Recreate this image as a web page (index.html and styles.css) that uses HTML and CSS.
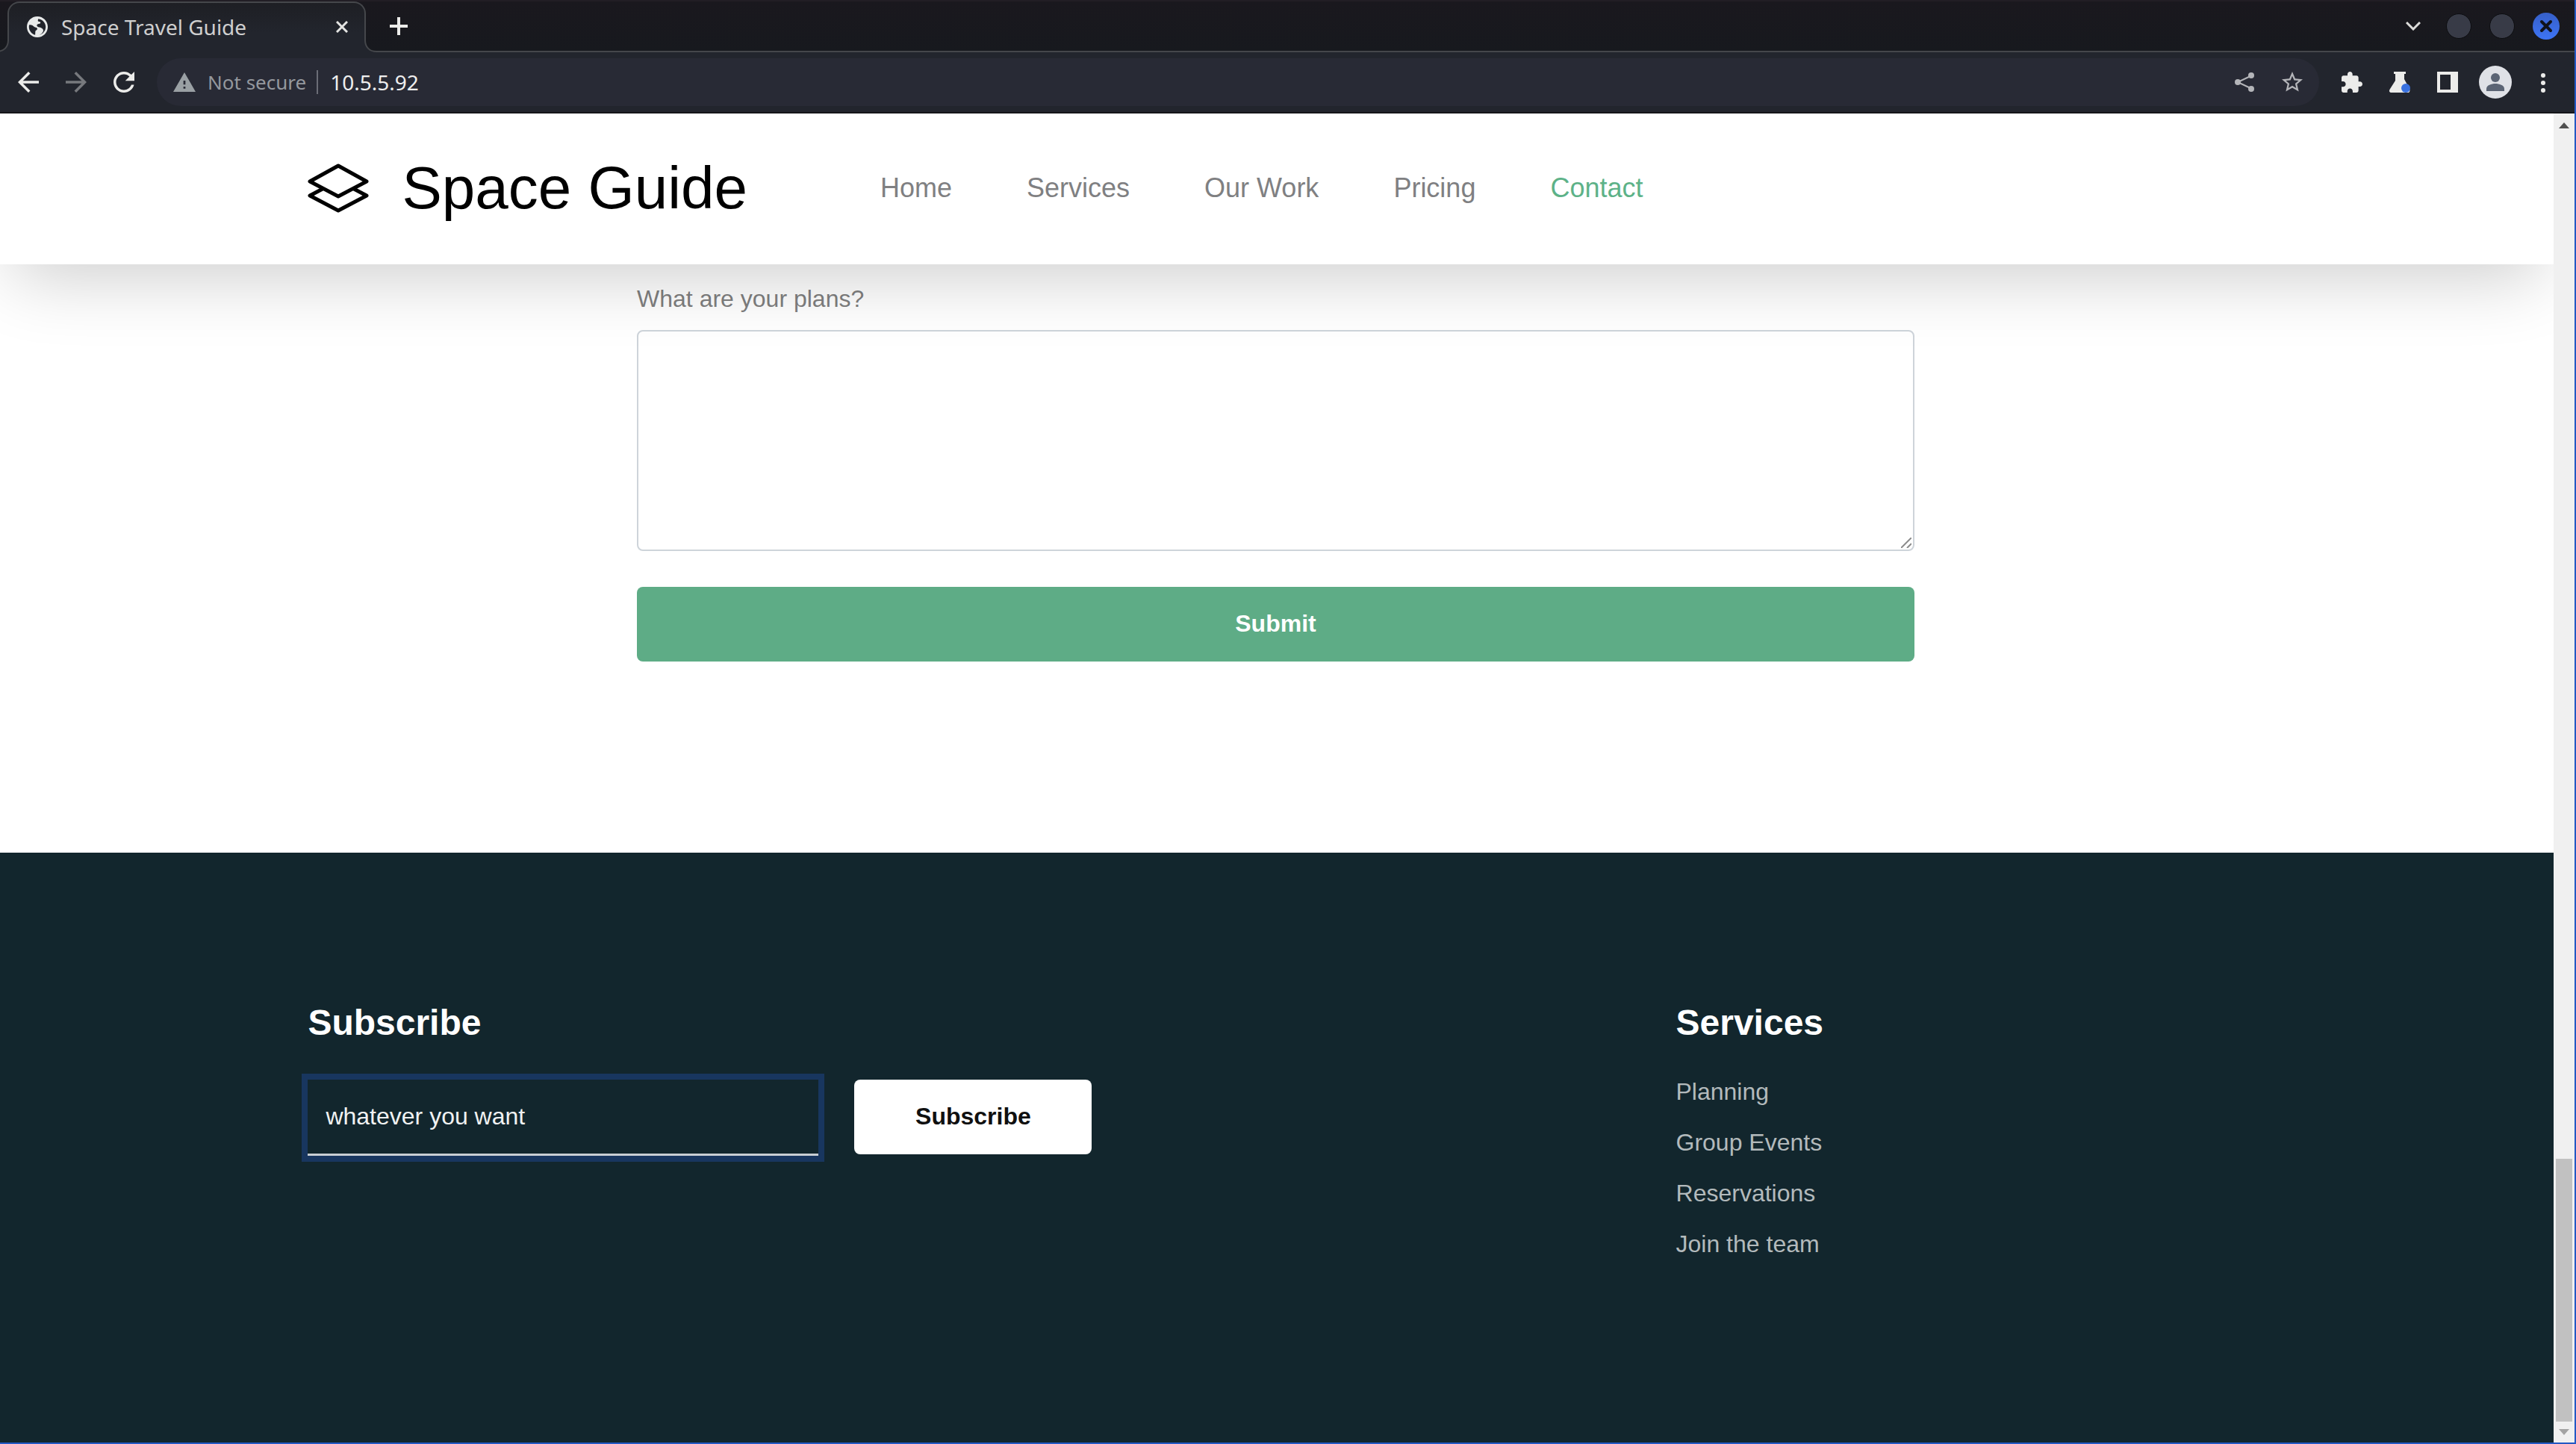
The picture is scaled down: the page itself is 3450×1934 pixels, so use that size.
FILE: index.html
```html
<!DOCTYPE html>
<html lang="en">
<head>
<meta charset="utf-8">
<title>Space Travel Guide</title>
<link rel="stylesheet" href="styles.css">
</head>
<body>
<div class="window">
  <div class="tabstrip">
    <div class="tab">
      <svg class="tab-foot foot-left" viewBox="0 0 16 16"><path fill="#22252d" d="M16 0v16H0v-1c9 0 15-6 15-15z"/><path d="M15 0c0 9-6 15-15 15" fill="none" stroke="#45474b" stroke-width="2"/></svg>
      <svg class="tab-foot foot-right" viewBox="0 0 16 16"><path fill="#22252d" d="M0 0v16h16v-1C7 15 1 9 1 0z"/><path d="M1 0c0 9 6 15 15 15" fill="none" stroke="#45474b" stroke-width="2"/></svg>
      <svg class="favicon" viewBox="2 2 20 20"><path fill="#e8eaea" d="M12 2C6.480 2 2 6.480 2 12s4.480 10 10 10 10-4.480 10-10S17.520 2 12 2zM4 12c0-.6.080-1.200.2-1.800C5.600 9.700 7.300 10.200 8.600 11.600c1 1.100 2.600.6 3.200 1.700.5 1-.3 2-1.400 2.300-.6 1.100-.2 2.400-.5 4.100C6.500 18.800 4 15.700 4 12zm9.900 7.700c1.500-.8 3-1.800 3.700-3.500.5-1.300-.5-2.700-1.700-3.200-1.700-.7-2.600-.4-3.800-1.300-.9-.8-.6-2 .5-2.400 1-.4 2.100.1 2.400-1 .2-1-.9-1.200-1.900-1.400-.7-.2-.8-1.400-.1-2.600C17 4.900 20 8.100 20 12c0 3.600-2.500 6.800-6.100 7.700z"/></svg>
      <span class="tab-title">Space Travel Guide</span>
      <button class="icon-btn tab-close" aria-label="Close tab"><svg viewBox="0 0 16 16"><path d="M1 1l14 14M15 1L1 15" fill="none" stroke="#e4e4e2" stroke-width="3"/></svg></button>
    </div>
    <button class="icon-btn new-tab" aria-label="New tab"><svg viewBox="0 0 24 24"><path d="M12 0v24M0 12h24" fill="none" stroke="#ececea" stroke-width="4"/></svg></button>
    <div class="window-controls">
      <button class="icon-btn chevron" aria-label="Search tabs"><svg viewBox="0 0 20 12"><path d="M1 1l9 9 9-9" fill="none" stroke="#dcdcda" stroke-width="3"/></svg></button>
      <button class="dot" aria-label="Minimize"></button>
      <button class="dot" aria-label="Maximize"></button>
      <button class="dot dot-close" aria-label="Close window"><svg viewBox="0 0 36 36"><path d="M12 12l12 12M24 12L12 24" stroke="#10131c" stroke-width="4" stroke-linecap="round"/></svg></button>
    </div>
  </div>

  <div class="toolbar">
    <div class="nav-buttons">
      <button class="icon-btn" aria-label="Back"><svg viewBox="4 4 16 16"><path fill="#ececea" d="M20 11H7.830l5.590-5.590L12 4l-8 8 8 8 1.410-1.410L7.830 13H20v-2z"/></svg></button>
      <button class="icon-btn" aria-label="Forward"><svg viewBox="4 4 16 16"><path fill="#77797d" d="M12 4l-1.410 1.410L16.170 11H4v2h12.170l-5.580 5.590L12 20l8-8z"/></svg></button>
      <button class="icon-btn" aria-label="Reload"><svg viewBox="4 4 16 16"><path fill="#ececea" d="M17.650 6.350C16.200 4.900 14.210 4 12 4c-4.420 0-7.990 3.580-7.990 8s3.570 8 7.990 8c3.730 0 6.840-2.550 7.730-6h-2.080c-.82 2.330-3.040 4-5.650 4-3.310 0-6-2.690-6-6s2.690-6 6-6c1.660 0 3.140.69 4.220 1.780L13 11h7V4l-2.350 2.350z"/></svg></button>
    </div>
    <div class="omnibox">
      <svg class="warn" viewBox="1 2 22 19"><path fill="#9aa0a4" d="M1 21h22L12 2 1 21zm12-3h-2v-2h2v2zm0-4h-2v-4h2v4z"/></svg>
      <span class="insecure">Not secure</span>
      <span class="divider"></span>
      <input class="address" aria-label="Address" value="10.5.5.92">
      <button class="icon-btn share" aria-label="Share"><svg viewBox="0 0 28 28"><path d="M24 5L5 14l19 9" fill="none" stroke="#b4b5b9" stroke-width="2"/><g fill="#b4b5b9"><circle cx="23" cy="5" r="4"/><circle cx="5" cy="14" r="4"/><circle cx="23" cy="23" r="4"/></g></svg></button>
      <button class="icon-btn" aria-label="Bookmark"><svg viewBox="2 2 20 20"><path fill="#b4b5b9" d="M22 9.240l-7.190-.62L12 2 9.190 8.630 2 9.240l5.460 4.730L5.820 21 12 17.270 18.180 21l-1.630-7.030L22 9.240zM12 15.400l-3.760 2.270 1-4.280-3.320-2.880 4.380-.38L12 6.100l1.710 4.040 4.380.38-3.320 2.880 1 4.280L12 15.400z"/></svg></button>
    </div>
    <div class="extensions">
      <button class="icon-btn" aria-label="Extensions"><svg viewBox="2 1 21 21"><path fill="#ececea" d="M20.500 11H19V7c0-1.100-.9-2-2-2h-4V3.500C13 2.120 11.880 1 10.500 1S8 2.120 8 3.500V5H4c-1.100 0-1.990.9-1.990 2v3.800H3.500c1.490 0 2.700 1.210 2.700 2.700s-1.210 2.700-2.700 2.700H2V20c0 1.100.9 2 2 2h3.800v-1.500c0-1.490 1.210-2.700 2.700-2.700 1.490 0 2.700 1.210 2.700 2.700V22H17c1.100 0 2-.9 2-2v-4h1.500c1.380 0 2.500-1.120 2.500-2.500S21.880 11 20.500 11z"/></svg></button>
      <button class="icon-btn" aria-label="Labs"><svg viewBox="0 0 28 28"><path fill="#ececea" d="M6 0h16v3h-2v7l7 13c1 3 0 5-2 5H3c-3 0-4-2-2-5l7-11V3H6z"/><circle cx="22" cy="22" r="6" fill="#3871e0"/></svg></button>
      <button class="icon-btn" aria-label="Side panel"><svg viewBox="0 0 28 28"><path fill="#ececea" fill-rule="evenodd" d="M0 0h28v28H0zM4 4v20h14V4z"/></svg></button>
      <button class="icon-btn avatar" aria-label="Profile"><svg viewBox="0 0 44 44"><circle cx="22" cy="22" r="22" fill="#dfe1e6"/><g fill="#5b6474"><circle cx="22" cy="16" r="6"/><path d="M10 34v-3c0-5 7-7 12-7s12 2 12 7v3z"/></g></svg></button>
      <button class="icon-btn menu" aria-label="Menu"><svg viewBox="0 0 8 28"><g fill="#ececea"><circle cx="4" cy="5" r="3"/><circle cx="4" cy="15" r="3"/><circle cx="4" cy="25" r="3"/></g></svg></button>
    </div>
  </div>

  <div class="viewport">
    <div class="page">
      <header class="site-header">
        <div class="container header-row">
          <a class="brand" href="#">
            <svg class="logo" viewBox="0 0 82 66"><g fill="none" stroke="#000" stroke-width="5" stroke-linejoin="round"><path d="M41 3l38 21-38 20L3 24z"/><path d="M20 34L3 43l38 20 38-20-17-9"/></g></svg>
            <span>Space Guide</span>
          </a>
          <nav class="site-nav">
            <a href="#">Home</a>
            <a href="#">Services</a>
            <a href="#">Our Work</a>
            <a href="#">Pricing</a>
            <a class="active" href="#">Contact</a>
          </nav>
        </div>
      </header>
      <main class="container">
        <form class="contact-form">
          <label for="plans">What are your plans?</label>
          <div class="message">
            <textarea id="plans"></textarea>
            <svg class="grip" viewBox="0 0 14 14"><path d="M0 14L14 0M8 14l6-6" stroke="#8c8c8c" stroke-width="2"/></svg>
          </div>
          <button type="button" class="btn btn-submit">Submit</button>
        </form>
      </main>
      <footer class="site-footer">
        <div class="container footer-grid">
          <section>
            <h3><label for="email">Subscribe</label></h3>
            <form class="subscribe-form">
              <input id="email" type="text" value="whatever you want">
              <button type="button" class="btn btn-light">Subscribe</button>
            </form>
          </section>
          <section>
            <h3>Services</h3>
            <ul>
              <li><a href="#">Planning</a></li>
              <li><a href="#">Group Events</a></li>
              <li><a href="#">Reservations</a></li>
              <li><a href="#">Join the team</a></li>
            </ul>
          </section>
        </div>
      </footer>
    </div>
    <div class="scrollbar">
      <svg viewBox="0 0 14 8"><path fill="#505050" d="M7 0l7 8H0z"/></svg>
      <div class="track"><div class="thumb"></div></div>
      <svg viewBox="0 0 14 8"><path fill="#a3a3a3" d="M0 0h14L7 8z"/></svg>
    </div>
  </div>
</div>
</body>
</html>
```
FILE: styles.css
```css
* { box-sizing: border-box; }

body {
  margin: 0;
  font-family: "Liberation Sans", Arial, sans-serif;
  font-size: 32px;
}

button, input, textarea { font: inherit; }
svg { display: block; }
a { text-decoration: none; }

.window {
  display: flex;
  flex-direction: column;
  min-height: 100vh;
  border-right: 2px solid #2459c4;
  border-bottom: 2px solid #2459c4;
  background: #22252d;
}

/* Browser chrome */
.tabstrip, .toolbar {
  display: flex;
  align-items: center;
  font-family: "Noto Sans", sans-serif;
  font-size: 28px;
}

.tabstrip {
  height: 70px;
  padding-left: 10px;
  background: linear-gradient(#1a181e, #17191e);
  border-bottom: 2px solid #45474b;
  border-top: 2px solid #221e25;
}

.icon-btn {
  flex: none;
  width: 28px;
  padding: 0;
  border: 0;
  background: none;
}

.tab {
  position: relative;
  display: flex;
  align-items: center;
  align-self: stretch;
  width: 480px;
  margin-bottom: -2px;
  padding: 0 22px 2px 24px;
  border: 2px solid #45474b;
  border-bottom: 0;
  border-radius: 16px 16px 0 0;
  background: linear-gradient(#1e1f24, #22252d 60%);
  color: #cfcfcf;
}

/* Flared corners where the tab meets the toolbar */
.tab-foot { position: absolute; bottom: 0; width: 16px; }
.foot-left { left: -16px; }
.foot-right { right: -16px; }

.favicon { width: 28px; }
.tab-title { flex: 1; margin-left: 18px; }
.tab-close { width: 16px; }
.new-tab { width: 24px; margin-left: 32px; }

.window-controls {
  display: flex;
  align-items: center;
  gap: 24px;
  margin-left: auto;
  padding-right: 20px;
}

.chevron { width: 20px; margin-right: 10px; }

.dot {
  width: 34px;
  height: 34px;
  padding: 0;
  border: 1px solid #0c0d10;
  border-radius: 50%;
  background: #383b47;
}

.dot-close { width: 36px; height: 36px; border: 0; background: linear-gradient(#365fc8, #3d74f5); }

.toolbar {
  height: 82px;
  padding: 0 38px 0 24px;
  border-bottom: 2px solid #15161a;
}

.nav-buttons { display: flex; gap: 36px; }

.omnibox {
  display: flex;
  align-items: center;
  flex: 1;
  height: 64px;
  margin: 0 30px;
  padding: 0 22px;
  border-radius: 32px;
  background: #282a35;
}

.warn { width: 30px; }
.insecure { margin-left: 16px; color: #94989e; font-size: 26px; }
.divider { width: 2px; height: 32px; margin: 0 16px 0 14px; background: #6b6d76; }

.address {
  flex: 1;
  padding: 0;
  border: 0;
  background: none;
  color: #eeeeee;
}

.share { margin-right: 36px; }

.extensions { display: flex; align-items: center; gap: 36px; }
.avatar { width: 44px; margin-left: -8px; }
.menu { width: 8px; margin-left: 2px; }

/* Page area */
.viewport { display: flex; flex: 1; }

.page {
  display: flex;
  flex-direction: column;
  flex: 1;
  overflow: hidden;
  background: #ffffff;
}

.container {
  width: calc(76% - 7px);
  margin-left: calc(12% + 2px);
}

.site-header {
  position: relative;
  z-index: 1;
  background: #ffffff;
  box-shadow: 0 32px 96px -16px rgba(0, 0, 0, 0.2);
}

.header-row {
  display: flex;
  align-items: center;
  height: 202px;
  padding-bottom: 2px;
}

.brand {
  display: flex;
  align-items: center;
  gap: 44px;
  color: #000000;
  font-size: 80px;
}

.logo { width: 82px; }
.site-nav { display: flex; gap: 100px; margin-left: 178px; font-size: 36px; }
.site-nav a { color: #7f8082; }
.site-nav .active { color: #5db288; }

.contact-form {
  display: flex;
  flex-direction: column;
  width: 66%;
  margin: 0 auto;
  padding: 22px 0 256px;
}

.contact-form label { line-height: 48px; color: #7f7f7f; }

.message { position: relative; margin: 18px 0 48px; }

.message textarea {
  display: block;
  width: 100%;
  height: 296px;
  border: 2px solid #ced4da;
  border-radius: 8px;
  background: #ffffff;
  resize: none;
}

.grip { position: absolute; right: 4px; bottom: 4px; width: 14px; }

.btn {
  height: 100px;
  padding: 0 0 2px;
  border: 0;
  border-radius: 8px;
  font-weight: bold;
}

.btn-submit { background: #5eac86; color: #ffffff; }
.btn-light { width: 318px; background: #ffffff; color: #101010; }

.site-footer { flex: 1; padding-top: 200px; background: #12262d; }
.footer-grid { display: grid; grid-template-columns: 1832fr 760fr; }

.site-footer h3 { margin: 0; color: #ffffff; font-size: 48px; line-height: 56px; }

.subscribe-form { display: flex; gap: 48px; margin-top: 48px; }

.subscribe-form input {
  width: 684px;
  height: 102px;
  padding: 0 24px;
  border: 0;
  border-bottom: 3px solid #c8ced3;
  outline: 8px solid #18365f;
  background: transparent;
  color: #f0f2f2;
}

.site-footer ul { margin: 40px 0 0; padding: 0; list-style: none; }
.site-footer li { margin-bottom: 20px; line-height: 48px; }
.site-footer li a { color: #b3babc; }

/* Scrollbar */
.scrollbar {
  display: flex;
  flex-direction: column;
  align-items: center;
  gap: 10px;
  width: 28px;
  padding: 12px 0 10px;
  background: #f0f0f0;
}

.scrollbar svg { width: 14px; }
.track { display: flex; flex-direction: column; justify-content: flex-end; flex: 1; width: 22px; }
.thumb { height: 352px; background: #c1c1c1; }
```
